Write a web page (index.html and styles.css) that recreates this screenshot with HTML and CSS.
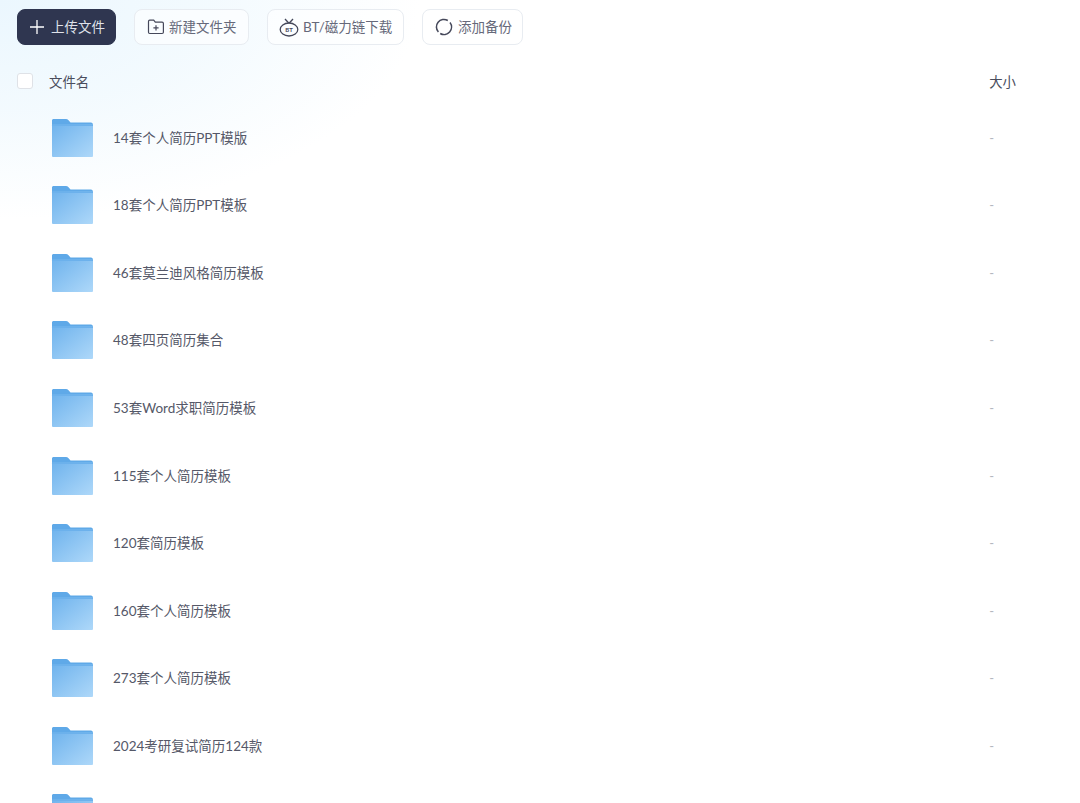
FILE: index.html
```html
<!DOCTYPE html>
<html lang="zh">
<head>
<meta charset="utf-8">
<title>文件</title>
<link rel="stylesheet" href="styles.css">
</head>
<body>
<svg class="defs" width="0" height="0" aria-hidden="true">
  <defs>
    <linearGradient id="fg" x1="0" y1="0" x2="1" y2="1">
      <stop offset="0" stop-color="#6fb3ed"/>
      <stop offset="1" stop-color="#aed8f9"/>
    </linearGradient>
    <symbol id="folder" viewBox="0 0 42 38">
      <path d="M1 1.500C1 .7 1.700 0 2.500 0h12.500c1 0 1.700.4 2.300 1l2.200 2.500H40c1 0 1.800.8 1.800 1.800V10H1z" fill="#5fa9e8"/>
      <rect x="1" y="5.500" width="41" height="32.500" rx="1" fill="url(#fg)"/>
      <rect x="1" y="5.500" width="41" height="1.500" fill="#6cb1ec"/>
    </symbol>
  </defs>
</svg>
<main class="page">
  <div class="toolbar">
    <button class="btn primary">
      <svg viewBox="0 0 14 14" width="14" height="14"><path d="M7 0v14M0 7h14" stroke="#fff" stroke-width="1.300" fill="none"/></svg>
      <span>上传文件</span>
    </button>
    <button class="btn folder-btn">
      <svg viewBox="0 0 18 18" width="18" height="18" fill="none" stroke="#45485a" stroke-width="1.200"><path d="M1.500 3.500c0-.8.500-1.300 1.200-1.300h4l1.600 2h6.800c.8 0 1.300.5 1.300 1.300v8.800c0 .8-.5 1.200-1.300 1.200H2.700c-.7 0-1.200-.4-1.200-1.200z"/><path d="M9 7.200v5.200M6.400 9.800h5.200"/></svg>
      <span>新建文件夹</span>
    </button>
    <button class="btn bt-btn">
      <svg viewBox="0 0 20 19" width="20" height="19" fill="none" stroke="#45485a" stroke-width="1.300"><ellipse cx="10" cy="11.500" rx="8.800" ry="6.500"/><path d="M6 1 9.700 5M14 1 10.300 5"/><text x="10" y="14" text-anchor="middle" class="bt-text">BT</text></svg>
      <span>BT/磁力链下载</span>
    </button>
    <button class="btn backup-btn">
      <svg viewBox="0 0 18 18" width="18" height="18" fill="none" stroke="#45485a" stroke-width="1.500"><path d="M12.800 2.500A7.500 7.500 0 0 0 3.400 14"/><path d="M5.200 15.500A7.500 7.500 0 0 0 15 4.500"/></svg>
      <span>添加备份</span>
    </button>
  </div>
  <div class="head">
    <span class="check"></span>
    <span class="head-name">文件名</span>
    <span class="head-size">大小</span>
  </div>
  <ul class="list">
    <li class="row"><svg class="fold"><use href="#folder"/></svg><span class="name">14套个人简历PPT模版</span><span class="size">-</span></li>
    <li class="row"><svg class="fold"><use href="#folder"/></svg><span class="name">18套个人简历PPT模板</span><span class="size">-</span></li>
    <li class="row"><svg class="fold"><use href="#folder"/></svg><span class="name">46套莫兰迪风格简历模板</span><span class="size">-</span></li>
    <li class="row"><svg class="fold"><use href="#folder"/></svg><span class="name">48套四页简历集合</span><span class="size">-</span></li>
    <li class="row"><svg class="fold"><use href="#folder"/></svg><span class="name">53套Word求职简历模板</span><span class="size">-</span></li>
    <li class="row"><svg class="fold"><use href="#folder"/></svg><span class="name">115套个人简历模板</span><span class="size">-</span></li>
    <li class="row"><svg class="fold"><use href="#folder"/></svg><span class="name">120套简历模板</span><span class="size">-</span></li>
    <li class="row"><svg class="fold"><use href="#folder"/></svg><span class="name">160套个人简历模板</span><span class="size">-</span></li>
    <li class="row"><svg class="fold"><use href="#folder"/></svg><span class="name">273套个人简历模板</span><span class="size">-</span></li>
    <li class="row"><svg class="fold"><use href="#folder"/></svg><span class="name">2024考研复试简历124款</span><span class="size">-</span></li>
    <li class="row"><svg class="fold"><use href="#folder"/></svg></li>
  </ul>
</main>
</body>
</html>
```
FILE: styles.css
```css
* { box-sizing: border-box; }
html, body { margin: 0; height: 100%; overflow: hidden; }
body {
  width: 1080px;
  height: 803px;
  font-family: "Lato", "Noto Sans CJK SC", sans-serif;
  background:
    radial-gradient(ellipse 420px 220px at 0 0, #ebf7fe 0%, rgba(240,249,254,.8) 50%, rgba(255,255,255,0) 100%),
    #fff;
  color: #45485a;
}
.defs { display: block; height: 0; }
.page { height: 803px; overflow: hidden; padding: 9px 0 0 17px; }
.toolbar { display: flex; gap: 18px; }
.btn {
  display: flex;
  align-items: center;
  flex: none;
  height: 36px;
  padding: 0 0 0 12px;
  border: 1px solid #e8ecf1;
  border-radius: 8px;
  background: rgba(255,255,255,.6);
  color: #66697a;
  font: 13.500px/20px "Lato", "Noto Sans CJK SC", sans-serif;
  white-space: nowrap;
}
.primary { width: 99px; gap: 7px; background: #2f3650; border-color: #2f3650; color: #dfe2ea; }
.folder-btn { width: 115px; gap: 4px; }
.bt-btn { width: 137px; padding-left: 11px; gap: 4px; }
.backup-btn { width: 101px; gap: 5px; }
.bt-text { font: 700 6px "Lato", sans-serif; fill: #45485a; stroke: none; }
.head { display: flex; align-items: center; height: 20px; margin-top: 26px; font-size: 13.400px; color: #4a4d5c; }
.check { width: 16px; height: 16px; border: 1px solid #dfe2e7; border-radius: 3px; background: #fff; }
.head-name { margin-left: 16px; }
.head-size { margin-left: auto; margin-right: 64px; }
.list { list-style: none; margin: 13px 0 0; padding: 0; }
.row { display: flex; align-items: center; height: 67.550px; padding-left: 34px; font-size: 13.500px; color: #555868; }
.fold { width: 42px; height: 38px; flex: none; }
.name { margin-left: 20px; padding-bottom: 2px; }
.size { margin-left: auto; margin-right: 86px; color: #b5b7bf; font-size: 13px; }
```
